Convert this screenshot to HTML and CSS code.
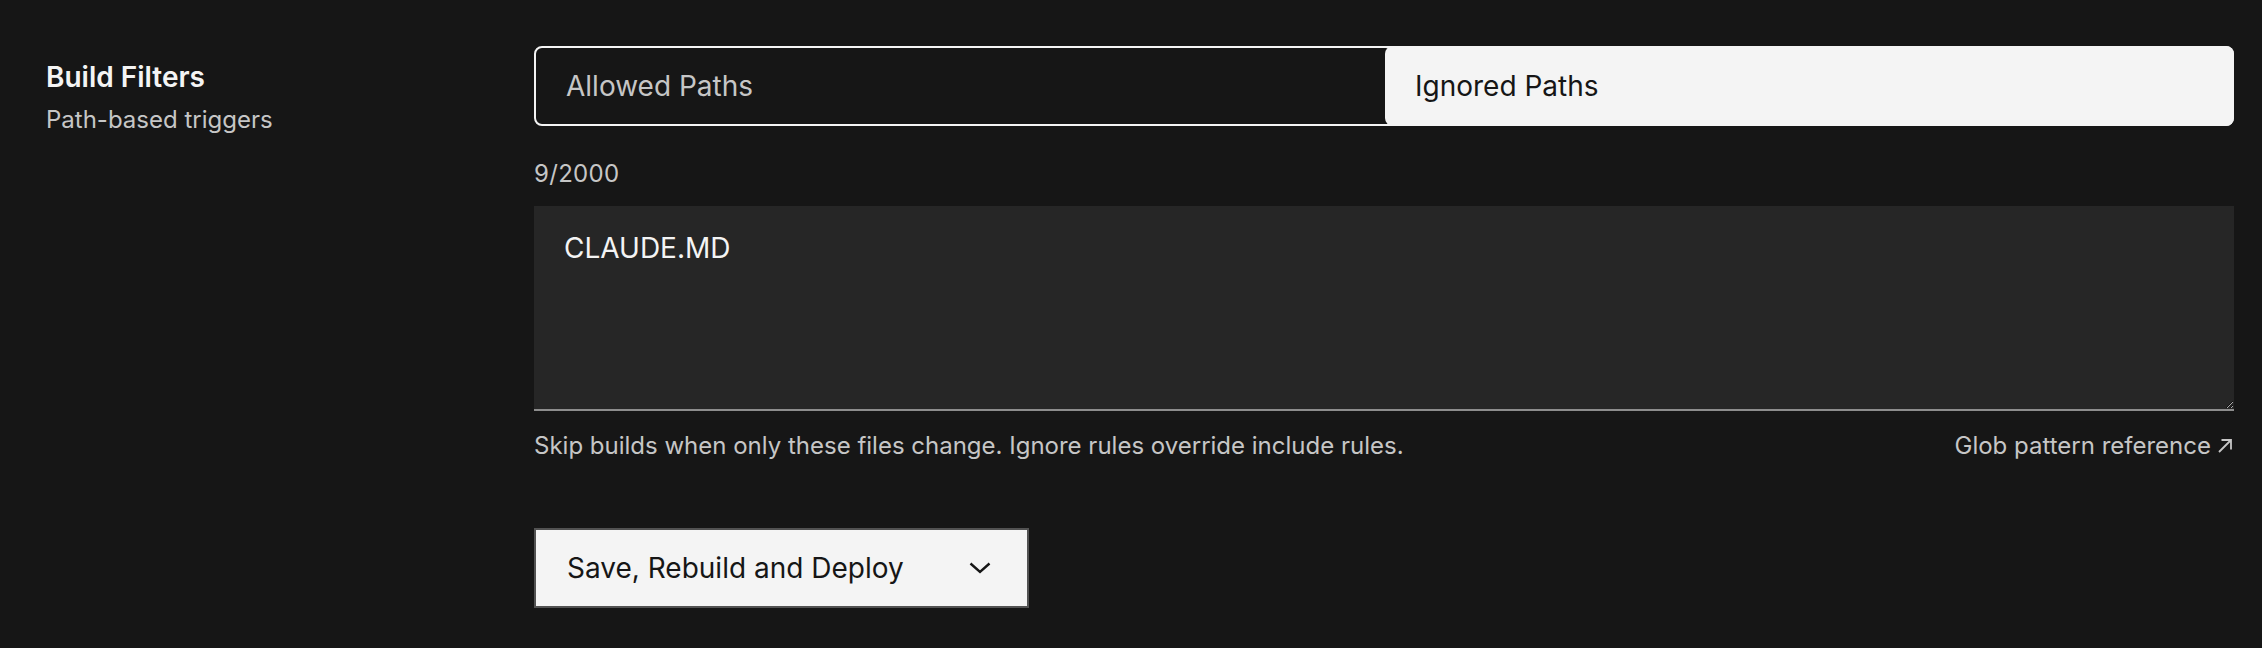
FILE: index.html
```html
<!DOCTYPE html>
<html lang="en">
<head>
    <meta charset="UTF-8">
    <meta name="viewport" content="width=device-width, initial-scale=1.0">
    <title>Build Filters</title>
    <link rel="stylesheet" href="styles.css">
</head>
<body>
    <div class="settings-row">
        <div class="row-info">
            <h3 class="row-title">Build Filters</h3>
            <p class="row-subtitle">Path-based triggers</p>
        </div>
        <div class="row-content">
            <div class="switcher">
                <button class="switch-btn">Allowed Paths</button>
                <button class="switch-btn selected">Ignored Paths</button>
            </div>
            <div class="counter">9/2000</div>
            <textarea class="paths-input" spellcheck="false">CLAUDE.MD</textarea>
            <div class="helper">
                <span>Skip builds when only these files change. Ignore rules override include rules.</span>
                <a class="helper-link" href="#">Glob pattern reference
                    <svg width="18" height="18" viewBox="0 0 18 18" fill="none" stroke="currentColor" stroke-width="1.8">
                        <path d="M3 15 L15 3 M5.5 3 H15 V12.5"/>
                    </svg>
                </a>
            </div>
            <button class="deploy-btn">
                <span>Save, Rebuild and Deploy</span>
                <svg width="22" height="12" viewBox="0 0 22 12" fill="none" stroke="currentColor" stroke-width="2.4">
                    <path d="M1.5 1.5 L11 10 L20.5 1.5"/>
                </svg>
            </button>
        </div>
    </div>
</body>
</html>
```

FILE: styles.css
```css
body {
    margin: 0;
    background: #161616;
    font-family: Inter, "Noto Sans", sans-serif;
    color: #f4f4f4;
}
.settings-row {
    display: grid;
    grid-template-columns: 488px 1fr;
    padding: 46px 28px 40px 46px;
}
.row-title {
    margin: 13px 0 0;
    font-size: 28px;
    line-height: 36px;
    font-weight: 600;
    color: #f4f4f4;
}
.row-subtitle {
    margin: 9px 0 0;
    font-size: 24px;
    line-height: 32px;
    color: #c6c6c6;
}
.row-content {
    display: flex;
    flex-direction: column;
}
.switcher {
    display: flex;
    height: 80px;
    box-sizing: border-box;
    border: 2px solid #f4f4f4;
    border-radius: 8px;
}
.switch-btn {
    flex: 1;
    margin: -2px 0;
    padding: 0 30px;
    text-align: left;
    background: transparent;
    border: none;
    border-radius: 8px;
    font-family: inherit;
    font-size: 28px;
    color: #c6c6c6;
    cursor: pointer;
}
.switch-btn.selected {
    margin-right: -2px;
    background: #f4f4f4;
    color: #161616;
}
.counter {
    margin-top: 32px;
    font-size: 24px;
    line-height: 32px;
    letter-spacing: 0.3px;
    color: #c6c6c6;
}
.paths-input {
    margin-top: 16px;
    height: 205px;
    box-sizing: border-box;
    padding: 24px 30px;
    background: #262626;
    border: none;
    border-bottom: 2px solid #8d8d8d;
    outline: none;
    resize: vertical;
    color-scheme: dark;
    font-family: inherit;
    font-size: 28px;
    line-height: 36px;
    color: #f4f4f4;
}
.helper {
    display: flex;
    justify-content: space-between;
    margin-top: 19px;
    font-size: 24px;
    line-height: 32px;
    color: #c6c6c6;
}
.helper-link {
    display: flex;
    align-items: center;
    gap: 5px;
    color: #c6c6c6;
    text-decoration: none;
}
.deploy-btn {
    display: flex;
    align-items: center;
    justify-content: space-between;
    width: 495px;
    height: 80px;
    margin-top: 66px;
    padding: 0 36px 0 31px;
    background: #f4f4f4;
    border: 2px solid #525252;
    font-family: inherit;
    font-size: 28px;
    color: #161616;
    cursor: pointer;
}
```
